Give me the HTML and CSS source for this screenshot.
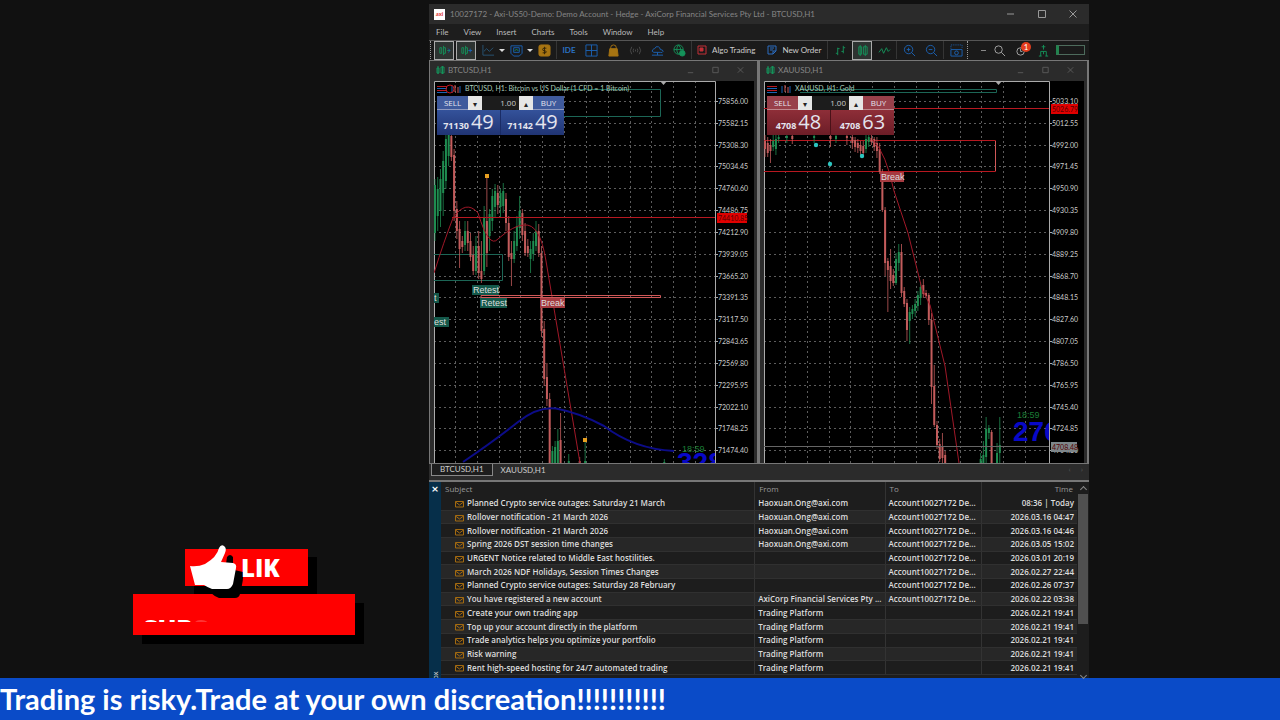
FILE: index.html
```html
<!DOCTYPE html>
<html lang="en">
<head>
<meta charset="UTF-8" />
<meta name="viewport" content="width=device-width, initial-scale=1" />
<title>Live Trading Stream</title>
<link rel="stylesheet" href="styles.css">
</head>
<body>

<div class="stage">
  <aside class="promo">
    <div class="promo-like">
      <svg class="thumb" viewBox="0 0 46 46" width="46" height="46" aria-hidden="true">
        <path class="thumb-shadow" d="M40 24L53 27Q54 33 50 49Q49 53 45 53L29 53Q24 51 21 48ZM37 12Q40 8 43 12V19H36Z" />
        <path d="M0 21 Q8 22 15 19 Q27 12 29 3 Q31 -1 34 1 Q37 3 35 8 L31 17 L43 18 Q47 19 46 23 L43 39 Q41 44 37 44 L22 44 Q17 42 14 40 L5 40 Z" />
      </svg>
      <span>LIK</span>
    </div>
    <div class="promo-sub"><span>SUB<i>S</i></span></div>
  </aside>

  <main class="terminal">
    <header class="titlebar">
      <span class="logo">axi</span>
      <span class="title">10027172 - Axi-US50-Demo: Demo Account - Hedge - AxiCorp Financial Services Pty Ltd - BTCUSD,H1</span>
      <div class="win-buttons">
        <button aria-label="Minimize"><svg viewBox="0 0 10 10"><path d="M1 5h7" /></svg></button>
        <button aria-label="Maximize"><svg viewBox="0 0 10 10"><path d="M1.500 1.500h7v7h-7z" /></svg></button>
        <button aria-label="Close"><svg viewBox="0 0 10 10"><path d="M1.500 1.500l7 7M8.500 1.500l-7 7" /></svg></button>
      </div>
    </header>

    <nav class="menu">
      <a href="#">File</a>
      <a href="#">View</a>
      <a href="#">Insert</a>
      <a href="#">Charts</a>
      <a href="#">Tools</a>
      <a href="#">Window</a>
      <a href="#">Help</a>
    </nav>

    <div class="toolbar">
      <span class="handle"></span>
      <button class="tool boxed green" aria-label="Auto scroll"><svg viewBox="0 0 14 14"><path d="M2 4v6M2 4h2v6H2M6 2v10M6 4h2v6H6M10 7h3" /><path class="blue" d="M11 5l2 2-2 2" /></svg></button>
      <button class="tool boxed green" aria-label="Chart shift"><svg viewBox="0 0 14 14"><path d="M2 4v6M2 4h2v6H2M6 2v10M6 4h2v6H6" /><path class="blue" d="M9 7h4M11 5v4" /></svg></button>
      <button class="tool dim" aria-label="Line chart"><svg viewBox="0 0 14 14"><path d="M1 1v11h12M2 8l3-3 3 3 4-4" /></svg></button>
      <span class="caret"></span>
      <button class="tool blue" aria-label="Templates"><svg viewBox="0 0 14 14"><path d="M1 2h12v8l-3 3H4l-3-3z" /><path d="M4 4h6v5H4z" /><path class="green" d="M5 7l2-1 2 1" /></svg></button>
      <span class="caret"></span>
      <button class="tool gold" aria-label="Symbols"><svg viewBox="0 0 14 14"><rect class="fill" x="1" y="1" width="12" height="12" rx="2" /><path class="dark" d="M9 4.500H6.500Q5 4.500 5 6t2 1.200Q9 7.500 9 8.500t-1.500 1H5M7 3v8" /></svg></button>
      <span class="sep"></span>
      <button class="tool ide" aria-label="MetaEditor">IDE</button>
      <button class="tool blue" aria-label="Tile windows"><svg viewBox="0 0 14 14"><path d="M1 1h12v12H1zM7 1v12M1 7h12" /></svg></button>
      <button class="tool gold" aria-label="Market"><svg viewBox="0 0 14 14"><path d="M4 6V4q0-3 3-3t3 3v2" /><path class="fill" d="M3 5h8l1 8H2z" /></svg></button>
      <button class="tool mute" aria-label="Signals"><svg viewBox="0 0 14 14"><path d="M3 3q-3 4 0 8M5 5q-1 2 0 4M11 3q3 4 0 8M9 5q1 2 0 4M7 6v2" /></svg></button>
      <button class="tool blue" aria-label="VPS"><svg viewBox="0 0 14 14"><path d="M3 9q-3-1-1-3 1-1 2-1 1-3 4-2 2 1 2 3 3 0 3 2-1 2-3 1zM1 12h12M7 9v3" /></svg></button>
      <button class="tool green" aria-label="Community"><svg viewBox="0 0 14 14"><circle cx="6" cy="6" r="5" /><path d="M1 6h10M6 1q-4 5 0 10M6 1q3 3 2 6" /><circle class="fill" cx="10" cy="10" r="3" /></svg></button>
      <span class="sep"></span>
      <button class="tool-text algo"><svg viewBox="0 0 10 10"><path d="M1 1h8v8H1z" /><path class="fill" d="M3 3h3v3H3z" /></svg>Algo Trading</button>
      <button class="tool-text order"><svg viewBox="0 0 10 10"><path d="M1 1h8v5L6 9H1zM3 3h4M3 5h3M6 9V6h3" /></svg>New Order</button>
      <span class="sep"></span>
      <button class="tool green" aria-label="Bar chart"><svg viewBox="0 0 14 14"><path d="M4 4v8M2 10h2M4 5h2M10 2v8M8 8h2M10 4h2" /></svg></button>
      <button class="tool boxed green" aria-label="Candlesticks"><svg viewBox="0 0 14 14"><path d="M3 3h3v8H3zM8 3h4v8H8zM4.500 1v12M10 1v12" /></svg></button>
      <button class="tool green" aria-label="Line"><svg viewBox="0 0 14 14"><path d="M1 9l3-4 2 5 3-6 2 4 2-2" /></svg></button>
      <span class="sep"></span>
      <button class="tool blue" aria-label="Zoom in"><svg viewBox="0 0 14 14"><circle cx="6" cy="6" r="4.500" /><path d="M4 6h4M6 4v4M9 9l4 4" /></svg></button>
      <button class="tool blue" aria-label="Zoom out"><svg viewBox="0 0 14 14"><circle cx="6" cy="6" r="4.500" /><path d="M4 6h4M9 9l4 4" /></svg></button>
      <span class="sep"></span>
      <button class="tool blue shot" aria-label="Screenshot"><svg viewBox="0 0 14 14"><path stroke-dasharray="1 1" d="M1 5V1h12v4" /><path d="M1 6h12v7H1z" /><circle cx="7" cy="9.500" r="2" /></svg></button>
      <span class="handle"></span>
      <div class="status">
        <span class="dash"></span>
        <button class="tool light" aria-label="Search"><svg viewBox="0 0 14 14"><circle cx="6" cy="6" r="4" /><path d="M9 9l4 4" /></svg></button>
        <button class="tool light notify" aria-label="Notifications"><svg viewBox="0 0 14 14"><circle cx="6" cy="8" r="4" /><path d="M6 5v3h2" /></svg><span class="badge">1</span></button>
        <button class="tool green" aria-label="Connection"><svg viewBox="0 0 14 14"><path d="M7 1v5M5 3h4M4 8h6M4 8v5M10 8v5M7 8v3M2 13h3M9 13h3" /></svg></button>
        <span class="battery"></span>
      </div>
    </div>

    <div class="charts">
      <section class="chart-window">
        <header class="chart-title">
          <svg viewBox="0 0 10 10"><path d="M2 3h2v5H2zM6 2h3v6H6zM3 1v8M7.500 1v8" /></svg>
          <span>BTCUSD,H1</span>
          <div class="win-buttons small">
            <button aria-label="Minimize"><svg viewBox="0 0 10 10"><path d="M2 8h6" /></svg></button>
            <button aria-label="Maximize"><svg viewBox="0 0 10 10"><path d="M2 2h6v6H2z" /></svg></button>
            <button aria-label="Close"><svg viewBox="0 0 10 10"><path d="M2 2l6 6M8 2l-6 6" /></svg></button>
          </div>
        </header>
        <div class="chart-body">
          <svg class="chart" id="btc" viewBox="0 0 320 382" preserveAspectRatio="xMinYMin slice"></svg>
          <form class="trade buy-blue">
            <div class="trade-top">
              <button type="button" class="side">SELL</button>
              <button type="button" class="step" aria-label="Decrease volume">▾</button>
              <input type="text" value="1.00" aria-label="BTCUSD volume">
              <button type="button" class="step" aria-label="Increase volume">▴</button>
              <button type="button" class="side">BUY</button>
            </div>
            <div class="trade-prices">
              <button type="button"><small>71130</small>49</button>
              <button type="button"><small>71142</small>49</button>
            </div>
          </form>
        </div>
      </section>

      <section class="chart-window">
        <header class="chart-title">
          <svg viewBox="0 0 10 10"><path d="M2 3h2v5H2zM6 2h3v6H6zM3 1v8M7.500 1v8" /></svg>
          <span>XAUUSD,H1</span>
          <div class="win-buttons small">
            <button aria-label="Minimize"><svg viewBox="0 0 10 10"><path d="M2 8h6" /></svg></button>
            <button aria-label="Maximize"><svg viewBox="0 0 10 10"><path d="M2 2h6v6H2z" /></svg></button>
            <button aria-label="Close"><svg viewBox="0 0 10 10"><path d="M2 2l6 6M8 2l-6 6" /></svg></button>
          </div>
        </header>
        <div class="chart-body">
          <svg class="chart" id="xau" viewBox="0 0 320 382" preserveAspectRatio="xMinYMin slice"></svg>
          <form class="trade buy-red">
            <div class="trade-top">
              <button type="button" class="side">SELL</button>
              <button type="button" class="step" aria-label="Decrease volume">▾</button>
              <input type="text" value="1.00" aria-label="XAUUSD volume">
              <button type="button" class="step" aria-label="Increase volume">▴</button>
              <button type="button" class="side">BUY</button>
            </div>
            <div class="trade-prices">
              <button type="button"><small>4708</small>48</button>
              <button type="button"><small>4708</small>63</button>
            </div>
          </form>
        </div>
      </section>
    </div>

    <div class="tabs">
      <button class="active">BTCUSD,H1</button>
      <button>XAUUSD,H1</button>
      <span class="tab-arrows"><span>‹</span><span>›</span></span>
    </div>

    <section class="mailbox">
      <div class="mail-side">
        <button aria-label="Close mailbox">×</button>
        <span>Toolbox</span>
      </div>
      <table>
        <colgroup><col class="c-subject"><col class="c-from"><col class="c-to"><col class="c-time"></colgroup>
        <thead><tr><th>Subject</th><th>From</th><th>To</th><th>Time</th></tr></thead>
        <tbody id="mails"></tbody>
      </table>
      <div class="scrollbar"><span class="up"></span><div class="thumb-bar"></div><span class="down"></span></div>
    </section>
  </main>
</div>

<footer class="ticker">Trading is risky.Trade at your own discreation!!!!!!!!!!!</footer>

<script src="script.js"></script>
</body>
</html>
```

FILE: styles.css
```css
* {
  box-sizing: border-box;
}
body {
  margin: 0;
  height: 100vh;
  display: flex;
  flex-direction: column;
  background: #111;
  color: #ccc;
  font-family: Lato, "Open Sans", sans-serif;
  font-size: 8px;
  overflow: hidden;
}
button {
  font: inherit;
  color: inherit;
  background: none;
  border: none;
  padding: 0;
}
svg {
  fill: none;
  stroke: currentColor;
}
.stage {
  flex: 1;
  min-height: 0;
  display: grid;
  grid-template-columns: 429fr 660fr 191fr;
}

/* like / subscribe overlay */
.promo {
  display: flex;
  flex-direction: column;
  justify-content: flex-end;
  align-items: flex-start;
  gap: 8px;
  padding: 0 0 43px 133px;
  color: #fff;
  font-family: "Open Sans", sans-serif;
  font-weight: 800;
}
.promo-like,
.promo-sub {
  background: #f00;
  box-shadow: 9px 9px 0 #000;
}
.promo-like {
  display: flex;
  align-items: center;
  gap: 5px;
  width: 123px;
  height: 37px;
  margin-left: 52px;
  padding-left: 5px;
  font-size: 24px;
  z-index: 1;
  box-shadow: 9px 8px 0 #000;
}
.promo-sub {
  width: 222px;
  height: 41px;
  padding: 24px 10px 0;
  font-size: 25px;
  line-height: 20px;
}
.promo-sub span {
  display: block;
  height: 4px;
  overflow: hidden;
}
.promo-sub i {
  font-style: normal;
  opacity: 0.2;
}
.thumb {
  overflow: visible;
  fill: #fff;
  stroke: none;
}
.thumb-shadow {
  fill: #000;
}

/* terminal window */
.terminal {
  display: flex;
  flex-direction: column;
  min-height: 0;
  min-width: 0;
  margin-top: 4px;
  background: #1d1d1d;
}
.titlebar {
  display: flex;
  align-items: center;
  height: 20px;
  padding: 0 11px 0 5px;
  gap: 5px;
  background: #2b2b2b;
  color: #858585;
}
.logo {
  width: 11px;
  height: 11px;
  background: #fff;
  color: #d33;
  font-size: 6px;
  font-weight: 700;
  line-height: 10px;
  text-align: center;
}
.title {
  flex: 1;
  white-space: nowrap;
  overflow: hidden;
}
.win-buttons {
  display: flex;
  gap: 21px;
  color: #999;
}
.win-buttons button,
.win-buttons svg {
  display: block;
  width: 10px;
  height: 10px;
}
.win-buttons.small {
  margin-left: auto;
  gap: 15px;
  color: #5c5c5c;
}
.win-buttons.small svg {
  width: 9px;
}
.menu {
  display: flex;
  align-items: center;
  gap: 15px;
  height: 16px;
  padding: 0 0 1px 7px;
}
.menu a {
  color: #bbb;
  text-decoration: none;
}
.toolbar {
  display: flex;
  align-items: center;
  height: 20px;
  padding: 0 4px 1px 1px;
  border-top: 1px solid #555;
  background: #1a1a1a;
}
.handle {
  width: 3px;
  height: 18px;
  border-left: 1px dotted #999;
}
.tool {
  width: 22px;
  height: 19px;
  display: flex;
  align-items: center;
  justify-content: center;
}
.tool svg {
  width: 13px;
  height: 13px;
}
.boxed {
  width: 20px;
  margin: 0 1px;
  border: 1px solid #aaa;
  background: #2d3331;
}
.green { color: #15925a; stroke: #15925a; }
.blue { color: #1b62b4; stroke: #1b62b4; }
.gold { color: #a67412; }
.dim { color: #285577; }
.mute { color: #4c4c4c; }
.light { color: #aaa; }
.dark { stroke: #332406; }
.fill { fill: currentColor; }
.ide {
  color: #2a70c0;
  font-weight: 700;
}
.caret {
  width: 6px;
  border: 3px solid transparent;
  border-top-color: #ddd;
  border-bottom: none;
}
.sep {
  width: 1px;
  height: 18px;
  margin: 0 1px;
  background: #353535;
}
.tool-text {
  display: flex;
  align-items: center;
  gap: 5px;
  padding: 0 5px 0 4px;
  white-space: nowrap;
}
.tool-text svg {
  width: 10px;
  height: 10px;
}
.tool-text + .tool-text {
  margin-left: 3px;
}
.algo svg { color: #c22f36; }
.order svg { color: #2a6cc0; }
.status {
  display: flex;
  align-items: center;
  margin-left: auto;
}
.dash {
  width: 5px;
  height: 1px;
  margin-right: 2px;
  background: #888;
}
.notify {
  position: relative;
}
.badge {
  position: absolute;
  top: 1px;
  right: 1px;
  width: 10px;
  height: 10px;
  border-radius: 5px;
  background: #e33d1d;
  color: #fff;
  line-height: 10px;
}
.battery {
  width: 29px;
  height: 10px;
  margin-left: 2px;
  border: 1px solid #4d6b5c;
  border-left: 3px solid #23834f;
}

/* charts */
.charts {
  flex: 1;
  min-height: 0;
  display: grid;
  grid-template-columns: 1fr 1fr;
  border-top: 1px solid #777;
}
.chart-window {
  display: flex;
  flex-direction: column;
  min-width: 0;
  min-height: 0;
  padding: 0 3px 0 4px;
  border: 1px solid #777;
  border-width: 0 2px 1px 1px;
  background: #2b2b2b;
}
.chart-title {
  display: flex;
  align-items: center;
  gap: 3px;
  height: 20px;
  padding: 0 8px 3px 1px;
  color: #858585;
}
.chart-title > svg {
  width: 10px;
  height: 10px;
  color: #15925a;
}
.chart-body {
  position: relative;
  flex: 1;
  min-height: 0;
}
.chart {
  display: block;
  width: 100%;
  height: 100%;
  background: #000;
}
.chart text {
  stroke: none;
}
.grid { stroke: #5c5c5c; stroke-dasharray: 2 3; }
.axis { stroke: #aaa; }
.price { fill: #ccc; font-size: 7px; }
.up-candle { stroke: #1f8c50; }
.down-candle { stroke: #c35c5c; }
.ma { stroke: #a01828; }
.curve { stroke: #0c0c88; stroke-width: 2; }
.level-red { stroke: #b81820; }
.level-pink { stroke: #d05858; }
.level-teal { stroke: #1c6656; }
.level-gray { stroke: #666; }
.tag-red { fill: #e00000; stroke: none; }
.tag-gray { fill: #7d868a; stroke: none; }
.tag-teal { fill: #14584a; stroke: none; }
.tag-pink { fill: #a53a40; stroke: none; }
.tag-label { fill: #ddd; font-size: 9px; font-family: "Liberation Sans", Arial, sans-serif; }
.tag-price { fill: #500; font-size: 7px; }
.caption { fill: #a9cbb9; font-size: 7px; }
.clock { fill: #1b7d36; font-size: 9px; font-family: "Liberation Sans", Arial, sans-serif; }
.count { fill: #0808c8; font-size: 28px; font-weight: 700; font-family: "Liberation Sans", Arial, sans-serif; }
.dot-orange { fill: #e8a020; stroke: none; }
.dot-cyan { fill: #2cc5c0; stroke: none; }
.marker { fill: #aaa; stroke: none; }

/* one click trading panel, floats over the chart */
.trade {
  position: absolute;
  top: 15px;
  left: 3px;
  width: 127px;
  color: #e4e4ee;
  font-family: "Open Sans", sans-serif;
}
.trade-top {
  display: flex;
  height: 14px;
}
.side {
  flex: 1;
  border-bottom: 1px solid #8f9ac0;
}
.step {
  width: 14px;
  background: #e6e6e6;
  color: #222;
}
.trade input {
  width: 37px;
  min-width: 0;
  padding: 0 3px 1px;
  border: none;
  background: #1c1c1c;
  color: #ccc;
  font: inherit;
  text-align: right;
}
.trade-prices {
  display: grid;
  grid-template: 25px / 1fr 1fr;
  gap: 1px;
}
.trade-prices button {
  display: flex;
  align-items: baseline;
  justify-content: center;
  gap: 2px;
  font-size: 20px;
  line-height: 24px;
}
.trade-prices small {
  font-size: 9px;
  font-weight: 700;
  line-height: 9px;
}
.buy-blue,
.buy-blue .trade-prices { background: #1a2c66; }
.buy-blue .side { background: #3f5a9c; }
.buy-blue .trade-prices button { background: linear-gradient(#34529a, #203474); }
.buy-red,
.buy-red .trade-prices { background: #4a1118; }
.buy-red .side { background: #98404a; border-color: #c0888e; }
.buy-red .trade-prices button { background: linear-gradient(#8e2e38, #6c1d27); }

.tabs {
  display: flex;
  align-items: flex-start;
  height: 16px;
  padding: 0 6px 0 2px;
  background: #2b2b2b;
}
.tabs button {
  height: 12px;
  padding: 0 8px;
  line-height: 11px;
}
.tabs .active {
  border: 1px solid #888;
  border-top: none;
  background: #1d1d1d;
}
.tab-arrows {
  display: flex;
  gap: 10px;
  margin-left: auto;
  color: #555;
}

/* mailbox */
.mailbox {
  display: flex;
  flex: 0 0 198px;
  align-items: flex-start;
  border-top: 2px solid #777;
}
.mail-side {
  display: flex;
  flex-direction: column;
  justify-content: space-between;
  align-self: stretch;
  width: 12px;
  overflow: hidden;
  background: #062f4a;
}
.mail-side button {
  color: #fff;
  font-size: 12px;
  font-weight: 700;
  line-height: 13px;
}
.mail-side span {
  height: 7px;
  overflow: hidden;
  writing-mode: vertical-rl;
  transform: rotate(180deg);
  direction: rtl;
  line-height: 12px;
}
table {
  flex: 1;
  min-width: 0;
  height: 193px;
  table-layout: fixed;
  border-collapse: collapse;
  color: #ddd;
  font-family: "Open Sans", "Noto Sans", sans-serif;
}
.c-from { width: 127px; }
.c-to { width: 96px; }
.c-time { width: 96px; }
th,
td {
  padding: 0 3px 1px;
  border-right: 1px solid #333;
  line-height: 11px;
  text-align: left;
  white-space: nowrap;
  overflow: hidden;
  text-overflow: ellipsis;
}
th {
  height: 15px;
  padding: 0 4px 3px;
  color: #999;
  font-weight: 400;
}
td {
  border-bottom: 1px solid #303030;
  font-weight: 600;
}
tbody tr:nth-child(even) {
  background: #272727;
}
th:last-child,
td:last-child {
  border-right: none;
  text-align: right;
}
.mail-icon {
  width: 9px;
  height: 8px;
  margin: 0 3px 0 11px;
  color: #a36a10;
  vertical-align: middle;
}
.scrollbar {
  display: flex;
  flex-direction: column;
  align-items: center;
  align-self: stretch;
  width: 12px;
  padding: 5px 0 0;
}
.thumb-bar {
  width: 10px;
  height: 130px;
  margin-top: 2px;
  background: #505050;
}
.up,
.down {
  width: 5px;
  height: 5px;
  border: 1px solid #888;
  border-width: 1px 0 0 1px;
  transform: rotate(45deg);
}
.down {
  margin-top: auto;
  transform: rotate(225deg);
}

.ticker {
  height: 42px;
  background: #0a4bc8;
  color: #fff;
  font-size: 29px;
  font-weight: 700;
  line-height: 42px;
  white-space: nowrap;
}
```

FILE: script.js
```js
const STEP = 21.83;

function add(svg, tag, cls, attrs, text) {
  const el = document.createElementNS('http://www.w3.org/2000/svg', tag);
  el.setAttribute('class', cls);
  for (const key in attrs) el.setAttribute(key, attrs[key]);
  if (text) el.textContent = text;
  svg.appendChild(el);
  return el;
}

function path(svg, cls, d) {
  return add(svg, 'path', cls, { d });
}

function drawGrid(svg, axisX, topPrice, priceStep) {
  for (let i = 0; i < 12; i++) {
    const x = Math.round(22 + i * STEP) - 0.5;
    path(svg, 'grid', `M${x} 0V382`);
  }
  for (let i = 0; i < 17; i++) {
    const y = Math.round(20 + i * STEP) + 0.5;
    path(svg, 'grid', `M0 ${y}H${axisX}`);
    path(svg, 'axis', `M${axisX} ${y}h3`);
    add(svg, 'text', 'price', { x: axisX + 3, y: y + 2 }, (topPrice - i * priceStep).toFixed(2));
  }
  path(svg, 'axis', `M0.5 382V0.5H${axisX + 0.5}V382`);
}

// candle: [index, high, bodyTop, bodyBottom, low, up]
function drawCandles(svg, candles) {
  candles.forEach(([i, high, top, bottom, low, up]) => {
    const x = 1 + i * 2.73;
    const cls = up ? 'up-candle' : 'down-candle';
    path(svg, cls, `M${x} ${high}V${low}`).setAttribute('stroke-width', 0.8);
    path(svg, cls, `M${x} ${top}V${bottom}`).setAttribute('stroke-width', 2);
  });
}

function tag(svg, kind, x, y, width, text) {
  add(svg, 'rect', 'tag-' + kind, { x, y, width, height: 10 });
  const label = kind === 'red' || kind === 'gray' ? 'tag-price' : 'tag-label';
  add(svg, 'text', label, { x: x + 1, y: y + 8 }, text);
}

// big number that stops at the price axis
function drawCount(svg, axisX, x, y, text) {
  const box = add(svg, 'svg', 'count-box', { x: 0, y: 0, width: axisX, height: 382 });
  add(box, 'text', 'count', { x, y }, text);
}

const btcCandles = [
  [0, 98, 104, 152, 160, 1], [1, 96, 108, 135, 150, 1], [2, 88, 98, 130, 146, 1], [3, 70, 80, 112, 135, 1],
  [4, 50, 58, 100, 108, 1], [5, 40, 50, 75, 85, 1], [6, 50, 55, 76, 80, 0], [7, 68, 74, 130, 140, 0],
  [8, 120, 128, 150, 158, 0], [9, 140, 148, 168, 187, 0], [10, 155, 160, 166, 172, 0], [11, 140, 150, 164, 170, 1],
  [12, 140, 150, 162, 170, 0], [13, 152, 160, 176, 180, 0], [14, 165, 174, 190, 194, 0], [15, 155, 165, 190, 194, 1],
  [16, 150, 165, 192, 198, 0], [17, 160, 190, 198, 202, 0], [18, 125, 137, 190, 194, 1], [19, 95, 140, 172, 186, 0],
  [20, 128, 133, 155, 170, 1], [21, 108, 115, 140, 150, 1], [22, 103, 110, 126, 136, 1], [23, 104, 112, 124, 133, 0],
  [24, 108, 112, 126, 136, 1], [25, 102, 110, 125, 132, 1], [26, 112, 118, 142, 150, 0], [27, 135, 142, 176, 180, 0],
  [28, 160, 172, 178, 205, 0], [29, 150, 160, 178, 182, 1], [30, 135, 145, 165, 170, 1], [31, 115, 130, 147, 158, 1],
  [32, 128, 132, 154, 160, 0], [33, 142, 150, 172, 175, 0], [34, 158, 165, 172, 176, 0], [35, 160, 168, 178, 192, 1],
  [36, 152, 160, 173, 180, 1], [37, 140, 150, 165, 170, 1], [38, 143, 150, 172, 176, 0], [39, 165, 172, 250, 256, 0],
  [40, 240, 248, 298, 305, 0], [41, 282, 296, 318, 325, 0], [42, 312, 318, 382, 382, 0], [43, 365, 370, 382, 382, 1],
  [44, 360, 366, 382, 382, 1], [45, 348, 360, 382, 382, 1], [46, 332, 359, 382, 382, 0], [49, 373, 380, 382, 382, 1],
  [53, 376, 380, 382, 382, 0], [55, 358, 380, 382, 382, 1], [84, 378, 381, 382, 382, 1]
];

const xauCandles = [
  [0, 54, 60, 68, 76, 0], [1, 56, 62, 72, 76, 0], [2, 58, 64, 70, 82, 0], [3, 54, 60, 66, 70, 1], [4, 54, 58, 68, 74, 1],
  [5, 54, 56, 58, 62, 1], [8, 54, 55, 57, 62, 1], [10, 54, 55, 58, 63, 0], [18, 54, 55, 57, 62, 1], [24, 54, 55, 58, 66, 0],
  [26, 54, 55, 58, 62, 1], [30, 54, 55, 57, 64, 0], [32, 54, 56, 62, 68, 0], [33, 56, 59, 66, 71, 0], [34, 58, 62, 67, 72, 0],
  [35, 60, 64, 70, 74, 0], [36, 60, 65, 72, 76, 0], [37, 54, 58, 68, 72, 1], [38, 54, 56, 61, 66, 1], [39, 54, 57, 61, 64, 0],
  [40, 56, 58, 66, 70, 0], [41, 56, 62, 70, 77, 0], [42, 62, 68, 91, 93, 0], [43, 88, 91, 129, 131, 0],
  [44, 126, 129, 182, 195, 0], [45, 177, 180, 189, 231, 0], [46, 168, 185, 200, 208, 0], [47, 188, 194, 202, 205, 0],
  [48, 172, 178, 202, 204, 1], [49, 163, 171, 182, 190, 1], [50, 163, 171, 212, 216, 0], [51, 206, 210, 223, 226, 0],
  [52, 218, 222, 249, 260, 0], [53, 226, 231, 240, 263, 1], [54, 224, 228, 233, 238, 1], [55, 218, 223, 230, 236, 1],
  [56, 210, 214, 225, 230, 1], [57, 201, 206, 217, 224, 1], [58, 198, 204, 213, 217, 0], [59, 209, 212, 215, 216, 0],
  [60, 212, 214, 239, 244, 0], [61, 232, 239, 306, 323, 0], [62, 284, 305, 344, 346, 0], [63, 340, 344, 364, 368, 0],
  [64, 358, 363, 378, 381, 0], [65, 352, 365, 377, 382, 0], [66, 370, 374, 382, 382, 0], [79, 372, 378, 382, 382, 1],
  [80, 360, 374, 382, 382, 1], [81, 336, 348, 376, 382, 1], [82, 344, 347, 352, 358, 1], [83, 349, 351, 382, 382, 0],
  [85, 362, 372, 382, 382, 1], [86, 336, 364, 372, 382, 1]
];

function drawFlags(svg) {
  path(svg, 'level-red', 'M3 5.500H13M3 9.500H13');
  path(svg, 'blue', 'M3 7.500H13M3 11.500H13M18 5v7M26 5v7');
  path(svg, 'level-pink', 'M21 4v7M24 6v6');
}

function drawBtc() {
  const svg = document.getElementById('btc');
  drawGrid(svg, 281, 75856, 273.85);
  path(svg, 'level-teal', 'M120 8.500H226.500V35.500H120M0 173.500H68.500V199.500H0');
  drawCandles(svg, btcCandles);
  path(svg, 'ma', 'M0 192Q10 160 19 137Q32 118 44 132Q55 168 64 158Q80 144 90 144Q106 142 112 180L146 382');
  path(svg, 'curve', 'M29 381Q60 360 84 341Q104 325 122 327.500Q146 332 170 345Q200 368 240 370');
  path(svg, 'level-red', 'M18 136.500H281');
  path(svg, 'level-pink', 'M47 214.500H226.500V216.500H47z');
  tag(svg, 'red', 283, 132, 30, '74410.85');
  tag(svg, 'teal', 38, 204, 27, 'Retest');
  tag(svg, 'teal', 46, 217, 27, 'Retest');
  tag(svg, 'pink', 106, 217, 25, 'Break');
  tag(svg, 'teal', -1, 212, 6, 't');
  tag(svg, 'teal', -1, 236, 16, 'est');
  add(svg, 'rect', 'dot-orange', { x: 51, y: 93, width: 4, height: 4 });
  add(svg, 'rect', 'dot-orange', { x: 149, y: 357, width: 4, height: 4 });
  add(svg, 'text', 'clock', { x: 248, y: 371 }, '18:59');
  drawCount(svg, 281, 243, 391, '328');
  path(svg, 'marker', 'M226 0h7l-3.500 4z');
  drawFlags(svg);
  add(svg, 'circle', 'level-red', { cx: 16, cy: 8, r: 4 });
  add(svg, 'text', 'caption', { x: 31, y: 10 }, 'BTCUSD, H1: Bitcoin vs US Dollar (1 CFD = 1 Bitcoin)');
}

function drawXau() {
  const svg = document.getElementById('xau');
  drawGrid(svg, 285, 5033.1, 20.55);
  path(svg, 'level-teal', 'M36 8.500H232.500V11.500H36');
  path(svg, 'level-red', 'M0 27.500H285M0 59.500H231.500V90.500H0');
  path(svg, 'level-pink', 'M231.500 60V90');
  drawCandles(svg, xauCandles);
  path(svg, 'ma', 'M109 59Q122 72 130 110L144 152L158 208L166 224L181 285L195 382');
  path(svg, 'level-gray', 'M0 365.500H285');
  tag(svg, 'red', 287, 23, 27, '5026.79');
  tag(svg, 'gray', 287, 361, 26, '4708.48');
  tag(svg, 'pink', 116, 91, 24, 'Break');
  [[52, 64], [66, 83], [98, 75]].forEach(([cx, cy]) => add(svg, 'circle', 'dot-cyan', { cx, cy, r: 2.2 }));
  add(svg, 'text', 'clock', { x: 253, y: 337 }, '18:59');
  drawCount(svg, 285, 249, 360, '276');
  path(svg, 'marker', 'M231 0h7l-3.500 4z');
  drawFlags(svg);
  add(svg, 'text', 'caption', { x: 31, y: 10 }, 'XAUUSD, H1:  Gold');
}

const account = 'Account10027172 De...';
const axi = 'Haoxuan.Ong@axi.com';
const mails = [
  ['Planned Crypto service outages: Saturday 21 March', axi, account, '08:36 | Today'],
  ['Rollover notification - 21 March 2026', axi, account, '2026.03.16 04:47'],
  ['Rollover notification - 21 March 2026', axi, account, '2026.03.16 04:46'],
  ['Spring 2026 DST session time changes', axi, account, '2026.03.05 15:02'],
  ['URGENT Notice related to Middle East hostilities.', '', account, '2026.03.01 20:19'],
  ['March 2026 NDF Holidays, Session Times Changes', '', account, '2026.02.27 22:44'],
  ['Planned Crypto service outages: Saturday 28 February', '', account, '2026.02.26 07:37'],
  ['You have registered a new account', 'AxiCorp Financial Services Pty ...', account, '2026.02.22 03:38'],
  ['Create your own trading app', 'Trading Platform', '', '2026.02.21 19:41'],
  ['Top up your account directly in the platform', 'Trading Platform', '', '2026.02.21 19:41'],
  ['Trade analytics helps you optimize your portfolio', 'Trading Platform', '', '2026.02.21 19:41'],
  ['Risk warning', 'Trading Platform', '', '2026.02.21 19:41'],
  ['Rent high-speed hosting for 24/7 automated trading', 'Trading Platform', '', '2026.02.21 19:41']
];
const mailIcon = '<svg class="mail-icon" viewBox="0 0 9 8"><path d="M0.500 1.500h8v5.500h-8zM0.500 2l4 3 4-3"/></svg>';

document.getElementById('mails').innerHTML = mails.map(row =>
  '<tr>' + row.map((cell, i) => `<td>${i === 0 ? mailIcon : ''}${cell}</td>`).join('') + '</tr>'
).join('');

drawBtc();
drawXau();
```
